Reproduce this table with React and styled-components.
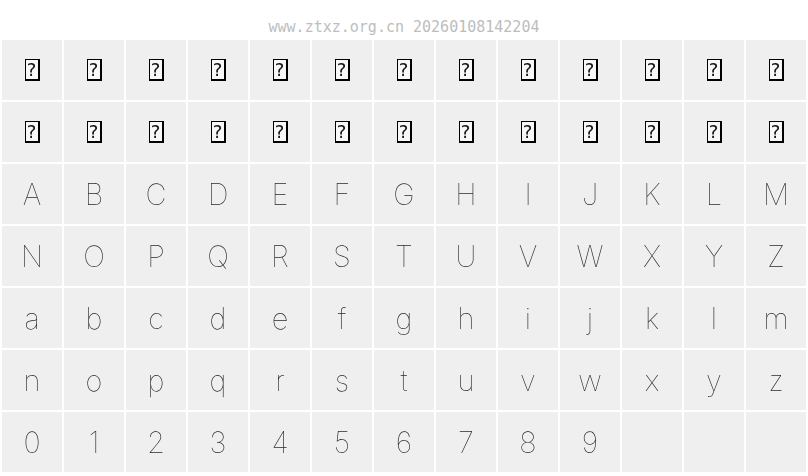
import React from "react";
import styled, { createGlobalStyle } from "styled-components";

const Global = createGlobalStyle`
  html, body { margin: 0; padding: 0; background: #ffffff; }
  body { width: 808px; height: 476px; overflow: hidden; }
`;

const Page = styled.div`
  display: flex;
  flex-direction: column;
`;

const Header = styled.div`
  height: 40px;
  display: flex;
  align-items: flex-end;
  justify-content: center;
  box-sizing: border-box;
  padding-bottom: 4px;
  font-family: "DejaVu Sans Mono", "Liberation Mono", monospace;
  font-size: 15px;
  line-height: 18px;
  color: #bdbdbd;
  -webkit-font-smoothing: none;
`;

const Grid = styled.div`
  display: grid;
  grid-template-columns: repeat(13, 60px);
  grid-auto-rows: 60px;
  gap: 2px;
  margin-left: 2px;
  filter: grayscale(1);
`;

const Cell = styled.div`
  background: #efefef;
  display: flex;
  align-items: center;
  justify-content: center;
  font-family: Inter, "Open Sans", sans-serif;
  font-weight: 120;
  font-size: 29px;
  color: #2a2a2a;
  line-height: 1;
`;

const Tofu = styled.span`
  display: inline-flex;
  align-items: center;
  justify-content: center;
  box-sizing: border-box;
  width: 15px;
  height: 22px;
  border: 1px solid #000;
  border-right-width: 2px;
  border-bottom-width: 2px;
  background: #f8f8f8;
  font-family: "DejaVu Sans", sans-serif;
  font-weight: 400;
  font-size: 18px;
  color: #111;
  line-height: 1;
`;

const upper = "ABCDEFGHIJKLMNOPQRSTUVWXYZ".split("");
const lower = "abcdefghijklmnopqrstuvwxyz".split("");
const digits = "0123456789".split("");

export default function App() {
  const tofus = Array.from({ length: 26 }, (_, i) => i);
  return (
    <Page>
      <Global />
      <Header>www.ztxz.org.cn 20260108142204</Header>
      <Grid>
        {tofus.map((i) => (
          <Cell key={"t" + i}>
            <Tofu>?</Tofu>
          </Cell>
        ))}
        {upper.map((c) => (
          <Cell key={"u" + c}>{c}</Cell>
        ))}
        {lower.map((c) => (
          <Cell key={"l" + c}>{c}</Cell>
        ))}
        {digits.map((c) => (
          <Cell key={"d" + c}>{c}</Cell>
        ))}
        <Cell />
        <Cell />
        <Cell />
      </Grid>
    </Page>
  );
}
